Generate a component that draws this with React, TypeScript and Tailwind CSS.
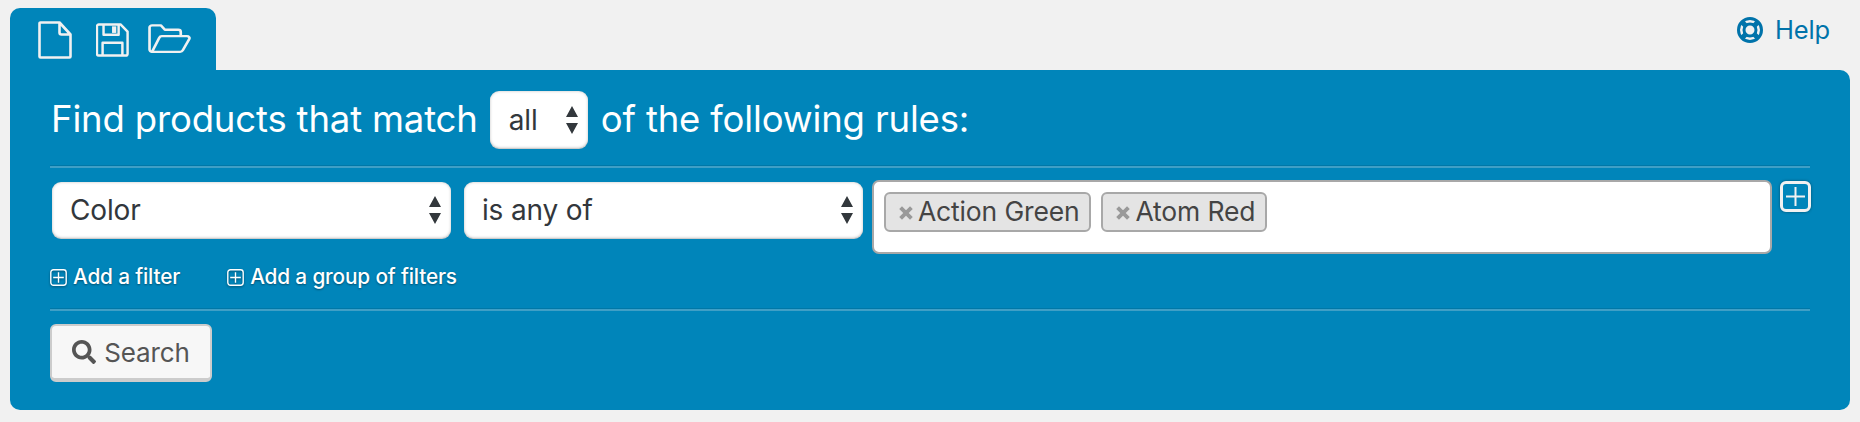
import { FaSearch } from "react-icons/fa";

const Arrows = () => (
  <svg width="14" height="30" viewBox="0 0 14 30" className="pointer-events-none absolute right-[9px] top-1/2 -translate-y-1/2 text-[#32373c]">
    <path d="M7 1l6 11H1zM7 29l6-11H1z" fill="currentColor" />
  </svg>
);

const PlusBox = () => (
  <svg width="17" height="17" viewBox="0 0 16 16" fill="none" stroke="currentColor" className="shrink-0 drop-shadow-[0_1px_1px_rgba(0,0,0,0.4)]">
    <rect x="0.75" y="0.75" width="14.5" height="14.5" rx="2.5" strokeWidth="1.3" />
    <path d="M8 3v10M3 8h10" strokeWidth="1.3" />
  </svg>
);

const Chip = ({ label }: { label: string }) => (
  <span className="flex h-10 items-center gap-[5px] rounded-[6px] border-2 border-[#a8a8a8] bg-[#e4e4e4] pl-[13px] pr-[10px] text-[26.5px] text-[#444]">
    <svg width="14" height="14" viewBox="0 0 13 13" stroke="#999" strokeWidth="3.6" className="mt-[2px]">
      <path d="M1.5 1.5l10 10M11.5 1.5l-10 10" />
    </svg>
    {label}
  </span>
);

const Rule = ({ className }: { className: string }) => (
  <div className={`border-t border-b-2 border-t-[#0077a7] border-b-[#3f9fc6] ${className}`} />
);

const Select = ({ value, className }: { value: string; className: string }) => (
  <div className={`relative flex shrink-0 items-center rounded-[9px] bg-white text-[28px] text-[#32373c] shadow-[inset_0_0_3px_rgba(0,0,0,0.25),0_1px_0_#ccc] ${className}`}>
    {value}
    <Arrows />
  </div>
);

export default function App() {
  return (
    <div className="h-[422px] w-[1860px] bg-[#f1f1f1] font-['Inter','Liberation_Sans',sans-serif] tracking-[-0.01em]">
      <div className="flex justify-between pt-2 pl-[10px] pr-[30px]">
        <div className="flex h-[62px] w-[206px] items-start rounded-t-[10px] bg-[#0085ba] pl-[28px] pt-[13px] text-[#f1f1f1]">
          <svg width="34" height="38" viewBox="0 0 34 38" fill="none" stroke="currentColor" strokeWidth="2.6" strokeLinejoin="round">
            <path d="M2.5 1.5h19l11 12v22a1 1 0 0 1-1 1h-29a1 1 0 0 1-1-1v-33a1 1 0 0 1 1-1zM21.5 1.5v10a2 2 0 0 0 2 2h9" />
          </svg>
          <svg width="33" height="34" viewBox="0 0 35 36" fill="none" stroke="currentColor" strokeWidth="2.6" strokeLinejoin="round" className="ml-[24px] mt-[2px]">
            <path d="M3 1.5h23l7.5 7.5v23.5a2 2 0 0 1-2 2H3a2 2 0 0 1-2-2v-29a2 2 0 0 1 2-2z" />
            <path d="M8 1.5v11h16v-11" />
            <path d="M7 34v-13h21v13" />
            <path d="M17 3.5h4.5v7H17z" fill="currentColor" stroke="none" />
          </svg>
          <svg width="43" height="30" viewBox="0 0 42 34" preserveAspectRatio="none" fill="none" stroke="currentColor" strokeWidth="2.6" strokeLinejoin="round" className="ml-[19px] mt-[3px]">
            <path d="M4 31.5a2.5 2.5 0 0 1-2.5-2.5v-25A2.5 2.5 0 0 1 4 1.5h8.5l4 5h13a2.5 2.5 0 0 1 2.5 2.5v4.5" />
            <path d="M4 31.5l7-16a3 3 0 0 1 2.5-1.7h24.5c2 0 3 1.7 2.3 3.2l-6.3 12.8a3 3 0 0 1-2.7 1.7z" />
          </svg>
        </div>
        <a className="flex items-center gap-3 self-start pt-[4px] text-[25.5px] leading-9 text-[#0073aa]">
          <svg width="26" height="26" viewBox="0 0 26 26" fill="none" stroke="currentColor">
            <circle cx="13" cy="13" r="11.5" strokeWidth="3" />
            <circle cx="13" cy="13" r="6" strokeWidth="3" />
            <path d="M5 5l4.5 4.5M21 5l-4.5 4.5M5 21l4.5-4.5M21 21l-4.5-4.5" strokeWidth="5" />
          </svg>
          Help
        </a>
      </div>

      <div className="mx-[10px] h-[340px] rounded-b-[10px] rounded-tr-[10px] bg-[#0085ba] px-10 pt-[21px] text-white">
        <div className="flex h-[57px] items-center pl-[1px] text-[36.5px]">
          <span>Find products that match</span>
          <Select value="all" className="ml-[12px] mr-[13px] h-[57px] w-[98px] pl-[19px]" />
          <span>of the following rules:</span>
        </div>
        <Rule className="mt-[17px]" />

        <div className="mt-[12px] flex items-start">
          <Select value="Color" className="mt-[2px] ml-[2px] h-[56px] w-[399px] pl-[18px]" />
          <Select value="is any of" className="mt-[2px] ml-[13px] h-[56px] w-[399px] pl-[18px]" />
          <div className="ml-[9px] flex h-[74px] w-[900px] shrink-0 items-start gap-[10px] rounded-[7px] border-2 border-[#a8a8a8] bg-white pl-[10px] pt-[10px]">
            <Chip label="Action Green" />
            <Chip label="Atom Red" />
          </div>
          <button className="ml-2 mt-[1px] flex h-[31px] w-[31px] shrink-0 items-center justify-center rounded-[6px] border-[3px] border-[#f1f1f1] shadow-[0_0_3px_rgba(0,0,0,0.4)]">
            <svg width="19" height="19" viewBox="0 0 19 19" stroke="#f1f1f1" strokeWidth="2">
              <path d="M9.5 0v19M0 9.5h19" />
            </svg>
          </button>
        </div>

        <div className="mt-[13px] flex h-5 items-center gap-[47px] text-[20.8px] font-medium [text-shadow:0_1px_2px_rgba(0,0,0,0.4)]">
          <span className="flex items-center gap-[6px]">
            <PlusBox />
            Add a filter
          </span>
          <span className="flex items-center gap-[6px]">
            <PlusBox />
            Add a group of filters
          </span>
        </div>
        <Rule className="mt-[21px]" />

        <button className="mt-[13px] flex h-[58px] w-[162px] items-center justify-center gap-[8px] rounded-[6px] border-2 border-b-4 border-[#ccc] bg-[#f7f7f7] text-[26px] text-[#555]">
          <FaSearch className="h-[24px] w-[24px]" />
          Search
        </button>
      </div>
    </div>
  );
}
